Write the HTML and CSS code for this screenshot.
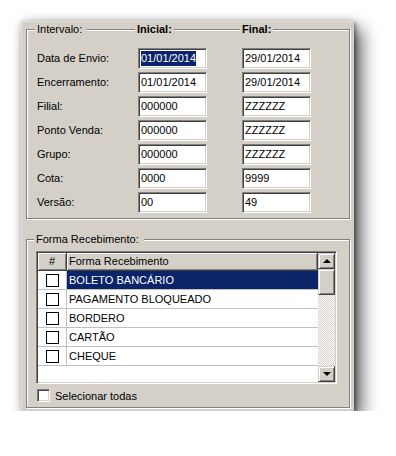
FILE: index.html
```html
<!DOCTYPE html>
<html lang="pt-BR">
<head>
    <meta charset="UTF-8">
    <title>Filtro de Recebimento</title>
    <link rel="stylesheet" href="styles.css">
</head>
<body>
    <div class="window">
        <div class="group group-range">
            <div class="group-head range-cols">
                <span class="caption first">Intervalo:</span>
                <span class="caption bold start">Inicial:</span>
                <span class="caption bold end">Final:</span>
            </div>
            <div class="range-grid range-cols">
                <div class="label">Data de Envio:</div>
                <div class="field"><span class="selected">01/01/2014</span></div>
                <div class="field">29/01/2014</div>

                <div class="label">Encerramento:</div>
                <div class="field">01/01/2014</div>
                <div class="field">29/01/2014</div>

                <div class="label">Filial:</div>
                <div class="field">000000</div>
                <div class="field">ZZZZZZ</div>

                <div class="label">Ponto Venda:</div>
                <div class="field">000000</div>
                <div class="field">ZZZZZZ</div>

                <div class="label">Grupo:</div>
                <div class="field">000000</div>
                <div class="field">ZZZZZZ</div>

                <div class="label">Cota:</div>
                <div class="field">0000</div>
                <div class="field">9999</div>

                <div class="label">Versão:</div>
                <div class="field">00</div>
                <div class="field">49</div>
            </div>
        </div>

        <div class="group group-pay">
            <div class="group-head">
                <span class="caption first">Forma Recebimento:</span>
            </div>
            <div class="grid-box">
                <div class="grid-table">
                    <div class="grid-header">
                        <div class="hcell hash">#</div>
                        <div class="hcell name">Forma Recebimento</div>
                    </div>
                    <div class="grid-row selected-row">
                        <div class="cell check"><span class="box"></span></div>
                        <div class="cell name">BOLETO BANCÁRIO</div>
                    </div>
                    <div class="grid-row">
                        <div class="cell check"><span class="box"></span></div>
                        <div class="cell name">PAGAMENTO BLOQUEADO</div>
                    </div>
                    <div class="grid-row">
                        <div class="cell check"><span class="box"></span></div>
                        <div class="cell name">BORDERO</div>
                    </div>
                    <div class="grid-row">
                        <div class="cell check"><span class="box"></span></div>
                        <div class="cell name">CARTÃO</div>
                    </div>
                    <div class="grid-row">
                        <div class="cell check"><span class="box"></span></div>
                        <div class="cell name">CHEQUE</div>
                    </div>
                </div>
                <div class="scrollbar">
                    <div class="sb-btn"><span class="arrow up"></span></div>
                    <div class="sb-thumb"></div>
                    <div class="sb-track"></div>
                    <div class="sb-btn"><span class="arrow down"></span></div>
                </div>
            </div>
            <div class="check-all">
                <span class="box3d"></span>
                <span>Selecionar todas</span>
            </div>
        </div>
    </div>
</body>
</html>
```

FILE: styles.css
```css
body {
    margin: 0;
    background: #fff;
    font-family: "Liberation Sans", Arial, sans-serif;
    font-size: 11px;
    color: #000;
}
.window {
    margin: 21px 0 0 21px;
    width: 333px;
    height: 390px;
    box-sizing: border-box;
    padding: 8px 4px 0 5px;
    background: #d4d0c8;
    border-left: 1px solid #e6e3dc;
    border-top: 1px solid #e6e3dc;
    box-shadow: 8px 8px 16px rgba(0, 0, 0, 0.6), 2px 2px 4px rgba(0, 0, 0, 0.35), 0 0 8px rgba(0, 0, 0, 0.18);
}

/* etched group boxes */
.group {
    width: 324px;
    box-sizing: border-box;
    margin-left: -1px;
    border: 1px solid #808080;
    box-shadow: inset 1px 1px 0 #fff, 1px 1px 0 #fff;
}
.group-range {
    height: 190px;
    margin-top: -1px;
    padding: 0 0 0 10px;
}
.group-pay {
    height: 169px;
    margin-top: 20px;
    padding: 0 0 0 9px;
}
.group-head {
    margin-top: -7px;
    height: 13px;
    line-height: 13px;
}
.caption {
    background: #d4d0c8;
    padding: 0 2px;
    justify-self: start;
}
.caption.first {
    margin-left: -2px;
    padding-right: 5px;
}
.caption.bold {
    font-weight: bold;
}
.caption.start {
    margin-left: -3px;
}
.caption.end {
    margin-left: -2px;
}

.range-cols {
    display: grid;
    grid-template-columns: 101px 104px 69px;
}
.range-grid {
    margin-top: 12px;
    row-gap: 3px;
}
.label {
    line-height: 21px;
}
.field {
    width: 69px;
    height: 21px;
    box-sizing: border-box;
    border-top: 1px solid #808080;
    border-left: 1px solid #808080;
    border-bottom: 1px solid #fff;
    border-right: 1px solid #fff;
    box-shadow: inset 1px 1px 0 #404040, inset -1px -1px 0 #d4d0c8;
    background: #fff;
    padding-left: 2px;
    line-height: 19px;
}
.selected {
    display: inline-block;
    background: #0a246a;
    color: #fff;
    line-height: 15px;
    vertical-align: middle;
    margin-top: -2px;
}

/* data grid */
.grid-box {
    margin-top: 5px;
    width: 301px;
    height: 133px;
    box-sizing: border-box;
    display: flex;
    border-top: 1px solid #808080;
    border-left: 1px solid #808080;
    border-bottom: 1px solid #fff;
    border-right: 1px solid #fff;
    box-shadow: inset 1px 1px 0 #404040, inset -1px -1px 0 #d4d0c8;
    padding: 1px;
    background: #fff;
}
.grid-table {
    flex: 1;
}
.grid-header {
    display: flex;
    height: 18px;
    background: #d4d0c8;
}
.hcell {
    box-sizing: border-box;
    height: 18px;
    line-height: 16px;
    border-right: 1px solid #404040;
    border-bottom: 1px solid #404040;
    box-shadow: inset 1px 1px 0 #fff, inset -1px -1px 0 #808080;
}
.hcell.hash {
    width: 29px;
    text-align: center;
}
.hcell.name {
    flex: 1;
    padding-left: 2px;
}
.grid-row {
    display: flex;
    height: 19px;
    box-sizing: border-box;
    border-bottom: 1px solid #c0c0c0;
}
.cell {
    line-height: 18px;
}
.cell.check {
    width: 29px;
    box-sizing: border-box;
    border-right: 1px solid #c0c0c0;
    display: flex;
    justify-content: center;
    align-items: center;
}
.cell.name {
    flex: 1;
    padding-left: 2px;
}
.selected-row .cell.name {
    background: #0a246a;
    color: #fff;
}
.box {
    width: 13px;
    height: 13px;
    box-sizing: border-box;
    border: 1px solid #000;
    background: #fff;
}

/* scrollbar */
.scrollbar {
    width: 17px;
    display: flex;
    flex-direction: column;
}
.sb-btn,
.sb-thumb {
    box-sizing: border-box;
    background: #d4d0c8;
    border-top: 1px solid #d4d0c8;
    border-left: 1px solid #d4d0c8;
    border-bottom: 1px solid #404040;
    border-right: 1px solid #404040;
    box-shadow: inset 1px 1px 0 #fff, inset -1px -1px 0 #808080;
}
.sb-btn {
    height: 16px;
    display: flex;
    justify-content: center;
    align-items: center;
}
.sb-thumb {
    height: 26px;
}
.sb-track {
    flex: 1;
    background-color: #fff;
    background-image: conic-gradient(#d4d0c8 25%, #fff 0 50%, #d4d0c8 0 75%, #fff 0);
    background-size: 2px 2px;
}
.arrow {
    width: 0;
    height: 0;
    border-left: 4px solid transparent;
    border-right: 4px solid transparent;
}
.arrow.up {
    border-bottom: 4px solid #000;
    margin-top: -1px;
}
.arrow.down {
    border-top: 4px solid #000;
}

.check-all {
    margin-top: 5px;
    display: flex;
    align-items: center;
    height: 13px;
    gap: 5px;
}
.box3d {
    width: 13px;
    height: 13px;
    margin-left: 1px;
    box-sizing: border-box;
    border-top: 1px solid #808080;
    border-left: 1px solid #808080;
    border-bottom: 1px solid #fff;
    border-right: 1px solid #fff;
    box-shadow: inset 1px 1px 0 #404040, inset -1px -1px 0 #d4d0c8;
    background: #fff;
}
```
